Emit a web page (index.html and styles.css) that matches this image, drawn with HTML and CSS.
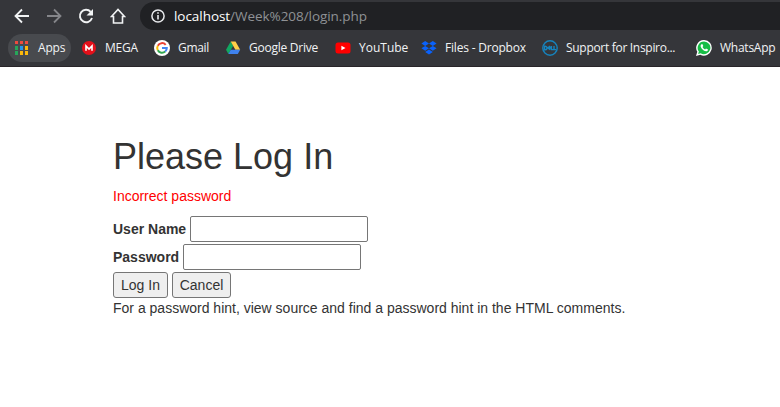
FILE: index.html
```html
<!DOCTYPE html>
<html lang="en">
<head>
<meta charset="utf-8">
<title>Please Log In</title>
<link rel="stylesheet" href="styles.css">
</head>
<body>
<header class="browser">
  <div class="toolbar">
    <nav class="nav">
      <svg width="16" height="16" viewBox="0 0 16 16" fill="none" stroke="#f1f3f4" stroke-width="1.8"><path d="M15 8H2M8 1.5 1.5 8 8 14.500"/></svg>
      <svg width="16" height="16" viewBox="0 0 16 16" fill="none" stroke="#85868a" stroke-width="1.8"><path d="M1 8h13M8 1.5 14.500 8 8 14.500"/></svg>
      <svg width="16" height="16" viewBox="0 0 16 16" fill="none" stroke="#f1f3f4" stroke-width="1.9"><path d="M14 10A6.200 6.200 0 1 1 12.700 3.800"/><path fill="#f1f3f4" stroke="none" d="M15 1v6.500H8.500z"/></svg>
      <svg width="16" height="16" viewBox="0 0 16 16" fill="none" stroke="#f1f3f4" stroke-width="1.6"><path d="M1.500 8.500 8 1.500l6.500 7H12.500V15h-9V8.500z"/></svg>
    </nav>
    <div class="address">
      <svg width="14" height="14" viewBox="0 0 14 14" fill="none" stroke="#e8eaed" stroke-width="1.5"><circle cx="7" cy="7" r="6.1"/><path d="M7 6v4.500M7 3.200v1.600" stroke-width="1.600"/></svg>
      <span class="url">localhost<span class="path">/Week%208/login.php</span></span>
    </div>
  </div>
  <div class="bookmarks">
    <a class="bookmark apps">
      <svg width="16" height="16" viewBox="0 0 16 16"><path fill="#ee4b3e" d="M1 1h3v3H1zM6 1h3v3H6zM11 1h3v3h-3z"/><path fill="#27a65a" d="M1 6h3v4H1zM1 11h3v4H1z"/><path fill="#2496ed" d="M6 6h3v4H6z"/><path fill="#fbb80b" d="M11 6h3v4h-3zM6 11h3v4H6zM11 11h3v4h-3z"/></svg>
      <span>Apps</span>
    </a>
    <a class="bookmark mega">
      <svg width="16" height="16" viewBox="0 0 16 16"><circle cx="8" cy="8" r="7" fill="#e3101a"/><path d="M5 10.800V6l3 3 3-3v4.800" fill="none" stroke="#fff" stroke-width="1.600"/></svg>
      <span>MEGA</span>
    </a>
    <a class="bookmark gmail">
      <svg width="16" height="16" viewBox="0 0 16 16"><circle cx="8" cy="8" r="8" fill="#fff"/><g fill="none" stroke-width="2"><path stroke="#ea4335" d="M11.700 4.800A4.800 4.800 0 0 0 3.800 5.700"/><path stroke="#fbbc05" d="M3.800 5.700a4.800 4.800 0 0 0 0 4.600"/><path stroke="#34a853" d="M3.800 10.300a4.800 4.800 0 0 0 7.400 1.300"/><path stroke="#4285f4" d="M11.200 11.600A4.800 4.800 0 0 0 12.800 8H8"/></g></svg>
      <span>Gmail</span>
    </a>
    <a class="bookmark drive">
      <svg width="16" height="16" viewBox="0 0 16 16"><path fill="#11a861" d="M5.700 1.500 1 9.800l2.400 4.200 4.800-8.300z"/><path fill="#ffcf48" d="M5.700 1.500h4.800l4.700 8.300h-4.800z"/><path fill="#3f82ee" d="M5.800 9.800h9.400L12.800 14H3.400z"/></svg>
      <span>Google Drive</span>
    </a>
    <a class="bookmark youtube">
      <svg width="16" height="16" viewBox="0 0 16 16"><rect x=".5" y="2.500" width="15" height="11" rx="2.500" fill="#f00"/><path fill="#fff" d="m6.400 5.700 4.100 2.300-4.100 2.300z"/></svg>
      <span>YouTube</span>
    </a>
    <a class="bookmark dropbox">
      <svg width="16" height="16" viewBox="0 0 16 16" fill="#0a62fb"><path d="m4.200 1 3.800 2.400-3.800 2.500L.4 3.400zM11.800 1l3.800 2.400-3.800 2.500L8 3.400zM4.200 5.900 8 8.300l-3.800 2.500L.4 8.300zM11.800 5.900l3.800 2.400-3.800 2.500L8 8.300zM8 9.500l3.800 2.400L8 14.400l-3.800-2.500z"/></svg>
      <span>Files - Dropbox</span>
    </a>
    <a class="bookmark dell">
      <svg width="16" height="16" viewBox="0 0 16 16" fill="none" stroke="#1683bd"><circle cx="8" cy="8" r="7.200" stroke-width="1.400"/><path stroke-width="1.400" d="M2.500 6.200v3.600h.8c2.300 0 2.300-3.600 0-3.600zM8.200 6.200 5.800 7.800l2.400 1.800M6 8l2.400-1.400M6.500 9l2.200-1.300M9.400 6v3.600h2M12 6v3.600h2"/></svg>
      <span>Support for Inspiro...</span>
    </a>
    <a class="bookmark whatsapp">
      <svg width="16" height="16" viewBox="0 0 16 16"><path fill="#fff" d="M8.100 0a7.800 7.800 0 1 1-3.800 14.700L0 16l1.300-4.200A7.800 7.800 0 0 1 8.100 0z"/><path fill="#16bd45" d="M8.100 1.400a6.400 6.400 0 1 1-3.500 11.800L2.100 14l.8-2.400A6.400 6.400 0 0 1 8.100 1.400z"/><path fill="#fff" d="M5.500 4.200 6.300 4l1 2-.8 1c.6 1.100 1.400 1.900 2.600 2.400l.9-1 2 1c0 1.300-.9 1.900-2 1.900C7.600 11 4.600 8 4.600 5.700c0-.6.4-1.200.9-1.500z"/></svg>
      <span>WhatsApp</span>
    </a>
  </div>
</header>
<main class="container">
  <h1>Please Log In</h1>
  <p class="error">Incorrect password</p>
  <form>
    <div class="row"><label for="nam">User Name</label><input class="field" type="text" id="nam"></div>
    <div class="row"><label for="pass">Password</label><input class="field" type="password" id="pass"></div>
    <div class="row"><button class="button login" type="button">Log In</button><button class="button cancel" type="button">Cancel</button></div>
  </form>
  <p class="hint">For a password hint, view source and find a password hint in the HTML comments.</p>
</main>
</body>
</html>
```

FILE: styles.css
```css
* { box-sizing: border-box; }

body {
  margin: 0;
  overflow: hidden;
  background: #fff;
  color: #333;
  font: 14px/20px "Liberation Sans", Arial, sans-serif;
}

svg { display: block; flex: none; }

.browser {
  height: 67px;
  padding-top: 2px;
  background: #35363a;
  border-bottom: 1px solid #292529;
  color: #f1f3f4;
  font-family: "Open Sans", "Noto Sans", sans-serif;
  white-space: nowrap;
}

.toolbar { display: flex; height: 28px; }

.nav {
  display: flex;
  align-items: center;
  gap: 16px;
  width: 140px;
  padding-left: 14px;
}

.address {
  display: flex;
  flex: 1;
  align-items: center;
  gap: 9px;
  padding-left: 11px;
  background: #202124;
  border-radius: 14px 0 0 14px;
}

.url { color: #fff; font-size: 13.5px; letter-spacing: -0.05px; }
.path { color: #8f9195; }

.bookmarks {
  display: grid;
  grid-template-columns: 73px 73px 71px 110px 86px 121px 154px 90px;
  height: 28px;
  margin-top: 4px;
  padding-left: 8px;
}

.bookmark {
  display: flex;
  align-items: center;
  gap: 8px;
  font-size: 12px;
}

.apps {
  width: 63px;
  padding-left: 6px;
  border-radius: 14px;
  background: #484a4e;
  letter-spacing: -0.2px;
}

.mega { letter-spacing: -0.2px; }
.gmail { letter-spacing: -0.3px; }
.drive { letter-spacing: -0.25px; }
.dropbox { letter-spacing: -0.2px; }
.dell { letter-spacing: -0.3px; }
.whatsapp { letter-spacing: -0.25px; }

.container { padding: 70px 0 0 113px; }

h1 {
  margin: 0 0 10px;
  font-size: 36px;
  font-weight: 400;
  line-height: 39px;
}

p { margin: 0; }
.error { margin-bottom: 9px; color: #f00; }

.row {
  display: flex;
  align-items: center;
  gap: 4px;
  height: 28px;
}

.row:last-child { height: 27px; align-items: flex-end; }

label { font-weight: 700; }

.field {
  width: 178px;
  height: 26px;
  padding: 1px 2px;
  border: 1px solid #767676;
  border-radius: 2px;
  background: #fff;
  font: inherit;
}

.button {
  height: 26px;
  padding: 0;
  border: 1px solid #767676;
  border-radius: 3px;
  background: #efefef;
  color: #333;
  font: inherit;
}

.login { width: 55px; }
.cancel { width: 59px; }
```
